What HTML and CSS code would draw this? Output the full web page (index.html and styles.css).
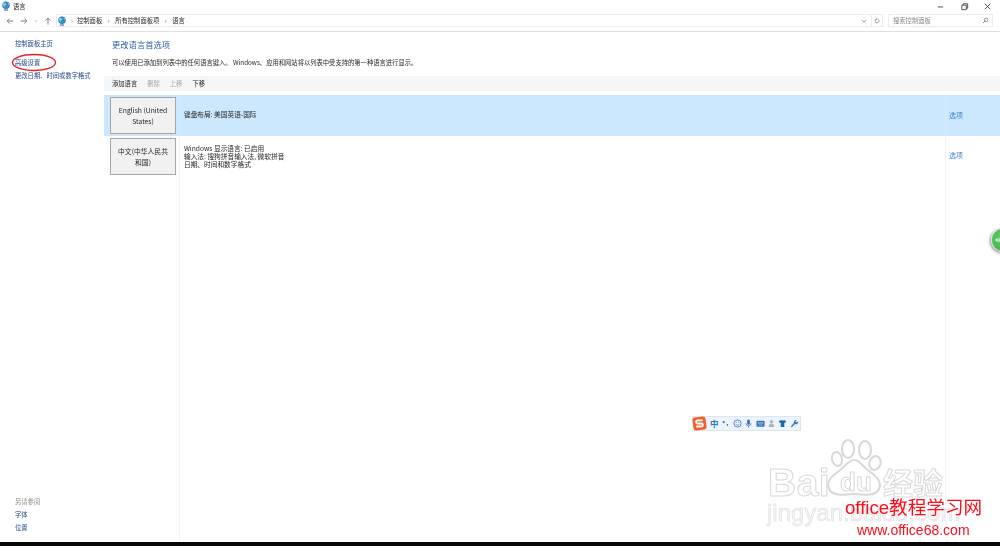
FILE: index.html
```html
<!DOCTYPE html>
<html lang="zh-CN">
<head>
<meta charset="utf-8">
<title>语言</title>
<link rel="stylesheet" href="styles.css">
</head>
<body>
<div class="window">
  <header class="titlebar">
    <svg class="globe" viewBox="0 0 12 12"><circle cx="6" cy="5" r="4.500" fill="#2f83c4"/><path d="M2.500 2.200l3 .3 1.300 2-2 .8.300 3-1.800-2-1.800-2zM7.500 1.200l2.700 2.500-1.500 1.500z" fill="#7cc6ea"/><path d="M6.500 6l2 .2-1 2.300z" fill="#62b24a"/><path d="M3.500 10.800h5" stroke="#1d5f94" stroke-width="1.200"/></svg>
    <span class="title">语言</span>
    <div class="winbtns">
      <svg viewBox="0 0 10 10"><path d="M2 5.500h6" stroke="#444" stroke-width="1"/></svg>
      <svg viewBox="0 0 10 10"><path d="M2 3.500h5v5H2zM3.500 3.500V2H8.500v5H7" fill="none" stroke="#444" stroke-width="1"/></svg>
      <svg viewBox="0 0 10 10"><path d="M2 2l6 6M8 2l-6 6" stroke="#444" stroke-width="1"/></svg>
    </div>
  </header>
  <div class="addressrow">
    <div class="navbtns">
      <svg viewBox="0 0 10 10"><path d="M9 5H1.500M4.500 2L1.500 5l3 3" fill="none" stroke="#666" stroke-width="1"/></svg>
      <svg viewBox="0 0 10 10"><path d="M1 5h7.500M5.500 2l3 3-3 3" fill="none" stroke="#666" stroke-width="1"/></svg>
      <svg class="small" viewBox="0 0 6 10"><path d="M1.500 4.500L3 6l1.500-1.500" fill="none" stroke="#888" stroke-width="1"/></svg>
      <svg viewBox="0 0 10 10"><path d="M5 9.500V1.500M2 4.500l3-3 3 3" fill="none" stroke="#666" stroke-width="1"/></svg>
    </div>
    <div class="addressbox">
      <svg class="globe" viewBox="0 0 12 12"><circle cx="6" cy="5" r="4.500" fill="#2f83c4"/><path d="M2.500 2.200l3 .3 1.300 2-2 .8.300 3-1.800-2-1.800-2zM7.500 1.200l2.700 2.500-1.500 1.500z" fill="#7cc6ea"/><path d="M6.500 6l2 .2-1 2.300z" fill="#62b24a"/><path d="M3.500 10.800h5" stroke="#1d5f94" stroke-width="1.200"/></svg>
      <span class="sep first">›</span><span>控制面板</span>
      <span class="sep">›</span><span>所有控制面板项</span>
      <span class="sep">›</span><span>语言</span>
      <svg class="chev" viewBox="0 0 8 8"><path d="M1.500 3L4 5.500 6.500 3" fill="none" stroke="#666" stroke-width="1"/></svg>
      <svg class="refresh" viewBox="0 0 10 10"><path d="M7.500 3.200A3.300 3.300 0 1 1 5 2.200M4 .8L5.500 2.200 4 3.600" fill="none" stroke="#666" stroke-width="1"/></svg>
    </div>
    <div class="searchbox">
      <span>搜索控制面板</span>
      <svg viewBox="0 0 10 10"><circle cx="6" cy="4" r="2.500" fill="none" stroke="#666" stroke-width="1"/><path d="M4.200 5.800L1.500 8.500" stroke="#666" stroke-width="1.200"/></svg>
    </div>
  </div>
  <div class="content">
    <nav class="sidebar">
      <div class="navlinks">
        <a>控制面板主页</a>
        <a class="advanced">高级设置</a>
        <a class="dateformat">更改日期、时间或数字格式</a>
      </div>
      <div class="seealso">
        <span class="seetitle">另请参阅</span>
        <a>字体</a>
        <a>位置</a>
      </div>
    </nav>
    <main class="main">
      <h1>更改语言首选项</h1>
      <p class="intro">可以使用已添加到列表中的任何语言键入。 Windows、应用和网站将以列表中受支持的第一种语言进行显示。</p>
      <div class="toolbar">
        <span>添加语言</span>
        <span class="off">删除</span>
        <span class="off">上移</span>
        <span>下移</span>
      </div>
      <div class="langlist">
        <div class="lang selected">
          <div class="langcell"><div class="langbtn">English (United States)</div></div>
          <div class="langinfo">键盘布局: 美国英语-国际</div>
          <a class="opt">选项</a>
        </div>
        <div class="lang grow">
          <div class="langcell"><div class="langbtn">中文(中华人民共和国)</div></div>
          <div class="langinfo top">Windows 显示语言: 已启用<br>输入法: 搜狗拼音输入法, 微软拼音<br>日期、时间和数字格式</div>
          <a class="opt top">选项</a>
        </div>
      </div>
    </main>
  </div>
  <div class="taskbar"></div>

  <svg class="redmark" viewBox="0 0 46 19"><ellipse cx="23" cy="9.500" rx="21.500" ry="8" fill="none" stroke="#ee1c25" stroke-width="1.300"/></svg>

  <div class="floatball">
    <svg viewBox="0 0 8 8"><path d="M0 4l2.500-2v4z" fill="#fff"/><path d="M4 1.500v5M6.500 1.500v5" stroke="#fff" stroke-width="1.200"/></svg>
  </div>

  <div class="imebar">
    <svg class="imelogo" viewBox="0 0 16 16"><rect x="1" y="1" width="14" height="14" rx="3" fill="#f0602a" transform="rotate(-8 8 8)"/><path d="M11.500 4.700H6a1.300 1.300 0 0 0 0 3.300h4a1.300 1.300 0 0 1 0 3.200H4.500" fill="none" stroke="#fff" stroke-width="2"/></svg>
    <span class="imezh">中</span>
    <svg viewBox="0 0 10 10"><circle cx="3" cy="3.500" r="1.200" fill="#2f75bb"/><path d="M6.500 5.500h1.500q0 2-1.500 2.500z" fill="#2f75bb"/></svg>
    <svg viewBox="0 0 10 10"><circle cx="5" cy="5" r="4" fill="#e8f1fa" stroke="#2f75bb" stroke-width=".9"/><path d="M3 6q2 1.800 4 0M3.200 3.800h1M5.800 3.800h1" fill="none" stroke="#2f75bb" stroke-width=".7"/></svg>
    <svg viewBox="0 0 10 10"><rect x="3.500" y="0.500" width="3" height="6" rx="1.500" fill="#2f75bb"/><path d="M2 4.500q0 3 3 3t3-3M5 7.500v2" fill="none" stroke="#2f75bb" stroke-width=".8"/></svg>
    <svg viewBox="0 0 10 10"><rect x="0.500" y="2" width="9" height="6.500" rx="1" fill="#2f75bb"/><path d="M2 4h6M2 5.300h6M3 6.800h4" stroke="#cfe2f5" stroke-width=".6"/></svg>
    <svg viewBox="0 0 10 10"><circle cx="5" cy="3" r="1.800" fill="#a9b4bf"/><path d="M2 9q0-4 3-4t3 4z" fill="#a9b4bf"/></svg>
    <svg viewBox="0 0 10 10"><path d="M3.300 1L1 2.500 2 4.500l1-.5V9h4V4l1 .5 1-2L6.700 1q-1.700 1.500-3.400 0z" fill="#1f66ad"/></svg>
    <svg viewBox="0 0 10 10"><path d="M9 2.500L7.300 4 6 3l1.500-1.800A2.500 2.500 0 0 0 4.500 4.500L1 8l1 1.200 3.500-3.700A2.500 2.500 0 0 0 9 2.500z" fill="#2f75bb"/></svg>
  </div>

  <div class="watermark">
    <svg class="paw" viewBox="0 0 56 58">
      <g fill="#fff" stroke="#d8d8d8" stroke-width="2">
        <ellipse cx="11" cy="20" rx="5" ry="7" transform="rotate(-15 11 20)"/>
        <ellipse cx="22" cy="10" rx="6" ry="9"/>
        <ellipse cx="39" cy="11" rx="6" ry="9"/>
        <ellipse cx="49" cy="24" rx="5.500" ry="7" transform="rotate(15 49 24)"/>
        <path d="M28 21c-6 0-9 7-15 11C4 38 0 44 3 50c3 7 14 6 25 5 11 1 22 2 25-5 3-6-1-12-10-18-6-4-9-11-15-11z"/>
      </g>
    </svg>
    <span class="wm-bai">Bai</span>
    <span class="wm-du">du</span>
    <span class="wm-cn">经验</span>
    <span class="wm-url">jingyan.baidu.com</span>
  </div>
  <div class="siteline">office教程学习网</div>
  <div class="siteurl">www.office68.com</div>
</div>
</body>
</html>
```
FILE: styles.css
```css
* { box-sizing: border-box; }
html, body { margin: 0; padding: 0; }
body { background: #fff; overflow: hidden; font-family: "Noto Sans CJK SC", "Liberation Sans", sans-serif; color: #262626; }
a { color: #1f4688; }
.window { position: relative; width: 1000px; height: 546px; display: flex; flex-direction: column; overflow: hidden; font-size: 6.300px; filter: blur(.3px); }

.titlebar { height: 13px; flex: none; display: flex; align-items: center; padding: 0 0 1px 1px; }
.globe { width: 10px; height: 10px; flex: none; }
.title { margin-left: 1px; padding-left: 1px; }
.winbtns { margin-left: auto; display: flex; gap: 14.500px; padding-right: 8px; }
.winbtns svg { width: 9px; height: 9px; }

.addressrow { height: 19px; flex: none; display: flex; align-items: center; border-bottom: 1px solid #dfdfdf; padding: 0 6px 3px 6px; }
.navbtns { display: flex; align-items: center; width: 50px; gap: 6px; flex: none; }
.navbtns svg { width: 8px; height: 8px; }
.navbtns svg.small { width: 4px; }
.addressbox { width: 827px; flex: none; height: 13px; border: 1px solid #ececec; display: flex; align-items: center; gap: 2.500px; margin-right: 5px; }
.addressbox .sep { color: #666; margin: 0 3px; width: 2px; }
.addressbox .sep.first { margin: 0 1.500px; }
.chev { width: 6px; height: 6px; margin-left: auto; margin-right: 2px; }
.refresh { width: 11px; height: 11px; padding: 2px; border-left: 1px solid #ececec; margin-right: 0; }
.searchbox { width: 105px; flex: none; height: 13px; border: 1px solid #ececec; display: flex; align-items: center; justify-content: space-between; padding: 0 3px 0 4px; color: #888; }
.searchbox svg { width: 7px; height: 7px; }

.content { flex: 1; display: flex; min-height: 0; }
.sidebar { width: 104px; flex: none; display: flex; flex-direction: column; justify-content: space-between; padding: 7px 0 10px 15px; }
.navlinks { display: flex; flex-direction: column; }
.navlinks a, .seealso a { display: block; line-height: 9px; }
.navlinks .advanced { margin-top: 10px; }
.navlinks .dateformat { margin-top: 4px; }
.seealso { display: flex; flex-direction: column; gap: 4px; }
.seetitle { color: #8a8a8a; line-height: 9px; }

.main { flex: 1; display: flex; flex-direction: column; min-width: 0; }
h1 { margin: 6px 0 0 8px; font-size: 8.300px; font-weight: 400; color: #2a5da8; line-height: 12px; }
.intro { margin: 8px 0 0 8px; line-height: 9px; }
.toolbar { margin-top: 9px; height: 15px; flex: none; background: #f5f6f7; display: flex; align-items: center; padding-left: 8px; gap: 10px; }
.toolbar .off { color: #a8a8a8; }
.langlist { margin-top: 4px; flex: 1; display: flex; flex-direction: column; }
.lang { display: flex; height: 41px; flex: none; }
.lang.grow { flex: 1; }
.lang.selected { background: #cce8ff; }
.langcell { width: 76px; flex: none; padding: 2px 3px 0 6px; border-right: 1px solid #eef5fd; }
.lang.selected .langcell { border-right-color: #d2ebff; }
.langbtn { height: 37px; background: #f1f1f1; border: 1px solid #a6a6a6; display: flex; align-items: center; justify-content: center; text-align: center; padding: 0 6px; font-size: 6.800px; line-height: 10.500px; }
.langinfo { flex: 1; padding: 0 0 3px 4px; align-self: center; font-size: 6.700px; line-height: 8px; }
.langinfo.top { align-self: flex-start; padding: 8px 0 0 4px; }
.opt { width: 55px; flex: none; border-left: 1px solid #eef5fd; padding: 0 0 2px 3px; color: #3a7fd0; display: flex; align-items: center; font-size: 7px; line-height: 8px; }
.lang.selected .opt { border-left-color: #d2ebff; }
.opt.top { align-items: flex-start; padding: 15px 0 0 3px; }

.taskbar { height: 4px; flex: none; background: #050505; }

.redmark { position: absolute; left: 11px; top: 53px; width: 46px; height: 19px; }

.floatball { position: absolute; left: 991px; top: 228px; width: 24px; height: 24px; border-radius: 50%; background: radial-gradient(circle at 45% 40%, #62d066, #37ab43); border: 1px solid #cfe3cf; box-shadow: -1px 1px 3px rgba(0,0,0,.45); display: flex; align-items: center; padding-left: 3px; }
.floatball svg { width: 6px; height: 6px; }

.imebar { position: absolute; left: 692px; top: 416px; width: 109px; height: 15px; display: flex; align-items: center; gap: 2.400px; padding-left: 18px; background: #eef4fb; border: 1px solid #dbe6f2; border-left: 0; }
.imebar svg { width: 9px; height: 9px; flex: none; }
.imebar .imelogo { position: absolute; left: 0; top: -1px; width: 15px; height: 15px; }
.imezh { color: #2f75bb; font-size: 8.500px; width: 9px; line-height: 9px; font-weight: 700; }

.watermark { position: absolute; left: 0; top: 0; width: 1000px; height: 546px; pointer-events: none; font-family: "Liberation Sans", sans-serif; color: #fff; -webkit-text-stroke: 1px #d8d8d8; }
.watermark span { position: absolute; line-height: 1; }
.paw { position: absolute; left: 826px; top: 439px; width: 56px; height: 58px; }
.wm-bai { left: 768px; top: 463px; font-size: 39px; font-weight: 700; letter-spacing: .5px; }
.wm-du { left: 840px; top: 469px; font-size: 26px; font-weight: 700; }
.wm-cn { left: 883px; top: 466px; font-size: 30px; font-family: "Noto Sans CJK SC", sans-serif; font-weight: 700; }
.wm-url { left: 767px; top: 501px; font-size: 24px; color: #f4f4f4; -webkit-text-stroke: .6px #e0e0e0; }

.siteline { position: absolute; left: 845px; top: 496px; font-size: 18.600px; line-height: 24px; color: #fb0d1b; font-family: "Liberation Sans", "Noto Sans CJK SC", sans-serif; white-space: nowrap; }
.siteurl { position: absolute; left: 857px; top: 522px; font-size: 14px; line-height: 16px; color: #fb0d1b; font-family: "Liberation Sans", sans-serif; white-space: nowrap; }
```
